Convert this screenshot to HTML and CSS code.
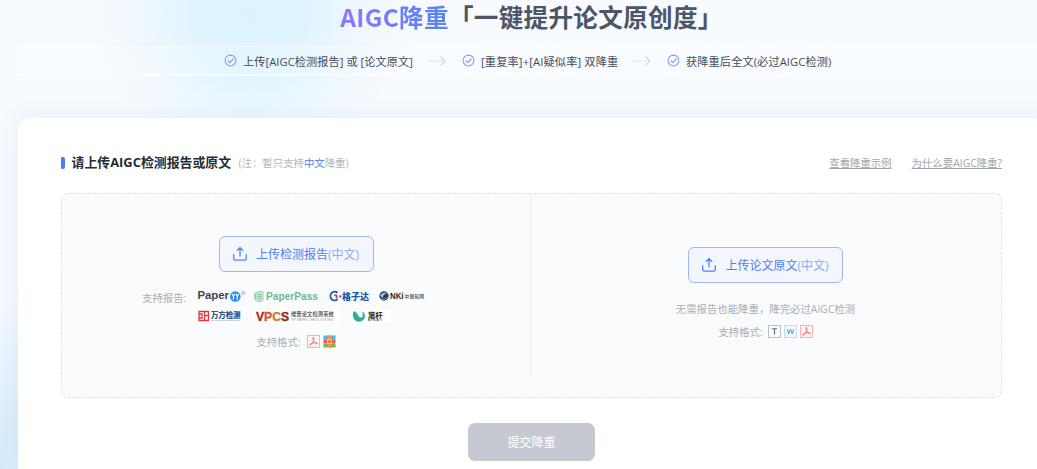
FILE: index.html
```html
<!DOCTYPE html>
<html lang="zh-CN">
<head>
  <meta charset="UTF-8">
  <meta name="viewport" content="width=device-width, initial-scale=1.0">
  <title>AIGC降重</title>
  <link rel="stylesheet" href="styles.css">
</head>
<body>
  <!-- Shared icons -->
  <svg class="sprite" width="0" height="0">
    <symbol id="icon-check" viewBox="0 0 14 14">
      <circle cx="7" cy="7" r="5.8" fill="none" stroke="#7f9bf5" stroke-width="1.1"/>
      <path d="M4.2 7.1l2.1 2.1 4-4.3" fill="none" stroke="#7090f3" stroke-width="1.1"/>
    </symbol>
    <symbol id="icon-arrow" viewBox="0 0 18 12">
      <path d="M0 6h16" fill="none" stroke="#d3d7df" stroke-width="1.2" stroke-dasharray="2 1"/>
      <path d="M12.5 1.5L17 6l-4.5 4.5" fill="none" stroke="#d3d7df" stroke-width="1.2"/>
    </symbol>
    <symbol id="icon-upload" viewBox="0 0 16 16">
      <path d="M1.7 8.3v4.2q0 1.600 1.600 1.600h9.400q1.600 0 1.600-1.600V8.300M8 10.400V2.200M4.900 4.700L8 1.600l3.100 3.100" fill="none" stroke="#5482f5" stroke-width="1.300"/>
    </symbol>
    <symbol id="icon-pdf" viewBox="0 0 13 13">
      <rect x=".5" y=".5" width="12" height="12" fill="#fff4f4" stroke="#f7b3b3"/>
      <path d="M6.200 2.300c1.400 0 .5 3.200-.5 5.200-.9 1.900-2.400 3.200-3 2.700-.7-.7 2.100-2.300 4.600-2.500 2-.2 3.400.2 3.200.9-.3.9-2.700-.5-3.700-2.300-.8-1.500-1.300-4-.6-4z" fill="none" stroke="#f26a6a" stroke-width=".9"/>
    </symbol>
  </svg>

  <div class="page">
    <h1 class="title"><span class="title-accent">AIGC降重</span>「一键提升论文原创度」</h1>

    <div class="steps">
      <svg class="check"><use href="#icon-check"/></svg>
      <span class="step-one">上传[AIGC检测报告] 或 [论文原文]</span>
      <svg class="arrow"><use href="#icon-arrow"/></svg>
      <svg class="check"><use href="#icon-check"/></svg>
      <span class="step-two">[重复率]+[AI疑似率] 双降重</span>
      <svg class="arrow"><use href="#icon-arrow"/></svg>
      <svg class="check"><use href="#icon-check"/></svg>
      <span class="step-three">获降重后全文(必过AIGC检测)</span>
    </div>

    <div class="card">
      <div class="card-head">
        <h2>请上传AIGC检测报告或原文</h2>
        <span class="note">(注：暂只支持<em>中文</em>降重)</span>
        <div class="links">
          <a href="#">查看降重示例</a>
          <a href="#">为什么要AIGC降重?</a>
        </div>
      </div>

      <div class="upload-box">
        <!-- Detection report -->
        <div class="upload-col report-col">
          <button class="upload-btn">
            <svg><use href="#icon-upload"/></svg>
            <span>上传检测报告<i>(中文)</i></span>
          </button>
          <div class="reports">
            <span class="label">支持报告:</span>
            <div class="logos">
              <div class="logo-row">
                <svg width="50" height="14" viewBox="0 0 50 14">
                  <text class="latin" x=".5" y="10.300" font-size="10" textLength="31.500" lengthAdjust="spacingAndGlyphs" fill="#3d434d">Paper</text>
                  <circle cx="38.300" cy="7.500" r="5.300" fill="#2f8de8"/>
                  <path d="M34.800 4.800l1.600 2.200 1.600-2.200M36.400 7v3.700M38.600 4.800l1.600 2.200 1.600-2.200M40.200 7v3.700" fill="none" stroke="#fff" stroke-width="1.100"/>
                  <circle cx="46.300" cy="4" r="1.700" fill="none" stroke="#a9adb5" stroke-width=".8"/>
                  <circle cx="46.300" cy="4" r=".6" fill="#a9adb5"/>
                </svg>
                <svg class="paperpass" width="68" height="14" viewBox="0 0 68 14">
                  <path d="M2.500 3.500l6-1.500 1.500 1v8l-1.500 1.500H4L2.500 11z" fill="#c4e5d2" stroke="#8dcba8" stroke-width=".8"/>
                  <path d="M1 5l1.500 6M4.500 5.500h4M4.500 7.500h4M5 9.500h3" fill="none" stroke="#74bd92" stroke-width=".8"/>
                  <text class="latin" x="13" y="10.500" font-size="10" textLength="52" lengthAdjust="spacingAndGlyphs" fill="#6cba8c">PaperPass</text>
                </svg>
                <svg class="gezida" width="44" height="14" viewBox="0 0 44 14">
                  <path d="M9.500 3.800A4.300 4.300 0 1 0 9.500 10.300" fill="none" stroke="#1b59a5" stroke-width="1.800"/>
                  <path d="M5.500 6.200q2-2 4.200.2v3.200H7.800V7.500z" fill="#e4474a"/>
                  <circle cx="12.300" cy="7.400" r="1.100" fill="#1b59a5"/>
                  <text class="cjk" x="14" y="10.500" font-size="9.300" textLength="27" lengthAdjust="spacingAndGlyphs" fill="#1b59a5">格子达</text>
                </svg>
                <svg class="cnki" width="50" height="14" viewBox="0 0 50 14">
                  <circle cx="6" cy="7" r="4.700" fill="#29405c"/>
                  <path d="M2 6.500q3-4 7-2.500Q5.500 5 4.500 9z" fill="#9ec4df"/>
                  <path d="M2 9.500q4 2.500 8.500-1.500" fill="none" stroke="#8da3b5"/>
                  <text class="latin" x="12" y="10.300" font-size="9" textLength="13.500" lengthAdjust="spacingAndGlyphs" fill="#202429">NKi</text>
                  <circle cx="24.700" cy="4" r=".9" fill="#ee9a4b"/>
                  <text class="cjk kai" x="26.500" y="9" font-size="4.600" textLength="19.500" fill="#42464c">中国知网</text>
                </svg>
              </div>
              <div class="logo-row second">
                <svg class="white-logo" width="48" height="14" viewBox="0 0 48 14">
                  <path d="M2 2.500h9.500v9H2zM2 5h3v4H2M7.500 2.500v9M7.500 6.500h4" fill="none" stroke="#df343d" stroke-width="1.300"/>
                  <text class="cjk" x="14" y="9" font-size="7.500" textLength="29.500" fill="#28558e">万方检测</text>
                  <text class="latin" x="14.500" y="12" font-size="2.300" textLength="28" fill="#8390a3">WANFANG DETECTION</text>
                </svg>
                <svg class="white-logo vpcs" width="86" height="14" viewBox="0 0 86 14">
                  <text class="latin" x="3" y="11.800" font-size="12.500" textLength="33" lengthAdjust="spacingAndGlyphs" stroke-width=".4"><tspan fill="#a82e2b" stroke="#a82e2b">V</tspan><tspan fill="#da562e" stroke="#da562e">P</tspan><tspan fill="#d57835" stroke="#d57835">C</tspan><tspan fill="#8e2929" stroke="#8e2929">S</tspan></text>
                  <text class="cjk light" x="38" y="7" font-size="5.500" textLength="43" lengthAdjust="spacingAndGlyphs" fill="#454545">维普论文检测系统</text>
                  <text class="latin thin" x="38" y="12" font-size="4" textLength="42" lengthAdjust="spacingAndGlyphs" fill="#999">VIP PAPER CHECK SYSTEM</text>
                </svg>
                <svg class="white-logo bigan" width="40" height="14" viewBox="0 0 40 14">
                  <path d="M3 2q3 1 4 4t4 2.500Q12.500 6 11 2q4 3 2.500 7c-2 5-9 5-11 0Q1 5 3 2z" fill="#2fae9d"/>
                  <text class="cjk" x="17" y="8.500" font-size="7.300" textLength="14.500" fill="#303334">笔杆</text>
                  <text class="latin" x="17" y="12.300" font-size="3.200" textLength="14" fill="#444">BIGA<tspan fill="#f19a38">N</tspan></text>
                </svg>
              </div>
            </div>
          </div>
          <div class="formats">
            <span class="label">支持格式:</span>
            <svg class="file"><use href="#icon-pdf"/></svg>
            <svg class="file" viewBox="0 0 13 13">
              <path d="M.5.5h12v4H.5z" fill="#4bb6ec"/>
              <path d="M.5 4.500h12v4H.5z" fill="#ef5a5a"/>
              <path d="M.5 8.500h12v4H.5z" fill="#72bd42"/>
              <path d="M4.800.5h3.400v12H4.800z" fill="#f59a3b"/>
              <rect x="4.500" y="4.800" width="4" height="3.500" fill="#ef6d49" stroke="#ffe3a8" stroke-width=".8"/>
            </svg>
          </div>
        </div>

        <!-- Original paper -->
        <div class="upload-col paper-col">
          <button class="upload-btn">
            <svg><use href="#icon-upload"/></svg>
            <span>上传论文原文<i>(中文)</i></span>
          </button>
          <p class="tip">无需报告也能降重，降完必过AIGC检测</p>
          <div class="formats">
            <span class="label">支持格式:</span>
            <svg class="file" viewBox="0 0 13 13">
              <rect x=".5" y=".5" width="12" height="12" fill="#fbfcfd" stroke="#bcc1c9"/>
              <path d="M4 3.800h5M6.500 3.800v5.700" fill="none" stroke="#5b6779" stroke-width="1.100"/>
            </svg>
            <svg class="file" viewBox="0 0 13 13">
              <rect x=".5" y=".5" width="12" height="12" fill="#f6faff" stroke="#bfdcf7"/>
              <path d="M3.400 4l1.300 5 1.800-5 1.800 5 1.300-5" fill="none" stroke="#4c9be8"/>
            </svg>
            <svg class="file"><use href="#icon-pdf"/></svg>
          </div>
        </div>
      </div>

      <button class="submit-btn">提交降重</button>
    </div>
  </div>
</body>
</html>
```
FILE: styles.css
```css
* {
  box-sizing: border-box;
}
body {
  margin: 0;
  height: 469px;
  overflow: hidden;
  font-family: "Open Sans", "Noto Sans CJK SC", sans-serif;
  color: #444b57;
  background:
    radial-gradient(ellipse 155px 150px at 250px 15px, #dcf3fd 0%, rgba(221, 243, 253, 0.9) 35%, rgba(226, 245, 253, 0.4) 70%, rgba(235, 246, 254, 0) 100%),
    radial-gradient(ellipse 100px 180px at 0 469px, #d4eafb 0%, rgba(214, 235, 251, 0) 100%),
    #f7faff;
}
h1, h2, p {
  margin: 0;
}
button {
  font-family: inherit;
  padding: 0;
}
.sprite {
  position: absolute;
}
.page {
  width: 1063px;
  height: 469px;
  overflow: hidden;
  display: flex;
  flex-direction: column;
}
.title {
  height: 46px;
  font-family: "Noto Sans CJK SC", sans-serif;
  font-size: 24.6px;
  font-weight: 700;
  line-height: 33px;
  letter-spacing: 0.3px;
  text-align: center;
  white-space: nowrap;
  color: #4d5664;
}
.title-accent {
  background: linear-gradient(90deg, #9075fb, #5585f5);
  -webkit-background-clip: text;
  background-clip: text;
  color: transparent;
}
.steps {
  height: 30px;
  margin-left: 18px;
  padding-left: 206px;
  display: flex;
  align-items: center;
  border-top: 1px solid rgba(255, 255, 255, 0.6);
  border-bottom: 2px solid rgba(255, 255, 255, 0.5);
  background: rgba(255, 255, 255, 0.2);
  font-size: 11.2px;
  white-space: nowrap;
}
.check {
  width: 13px;
  height: 13px;
  margin-right: 6px;
}
.arrow {
  width: 18px;
  height: 12px;
  margin: 0 16px 0 14px;
}
.step-one {
  width: 171px;
  letter-spacing: 0.05px;
}
.step-two {
  width: 138px;
  letter-spacing: 0.15px;
}
.step-three {
  letter-spacing: 0.1px;
}
.card {
  width: 1026px;
  height: 351px;
  flex: none;
  margin: 42px 0 0 18px;
  padding: 35px 42px 0 43px;
  display: flex;
  flex-direction: column;
  border-radius: 14px 14px 0 0;
  background: #fff;
  box-shadow: 0 0 24px rgba(100, 140, 190, 0.11);
}
.card-head {
  height: 20px;
  display: flex;
  align-items: center;
  white-space: nowrap;
}
.card-head::before {
  content: "";
  width: 4px;
  height: 12px;
  margin-right: 6.5px;
  border-radius: 1px 2px 2px 1px;
  background: #4a7cf6;
}
.card-head h2 {
  width: 161px;
  line-height: 18px;
  margin-top: -2px;
  font-size: 12.9px;
  color: #282b31;
}
.note {
  margin: -1px 0 0 6px;
  font-size: 10.4px;
  color: #b2b5bb;
}
.note em {
  font-style: normal;
  color: #4a7cf6;
}
.links {
  margin: -1px 0 0 auto;
  display: flex;
  gap: 20px;
  font-size: 10.4px;
}
.links a {
  color: #a3a6ab;
}
.upload-box {
  height: 205px;
  margin-top: 20px;
  display: flex;
  border: 1px dashed #dde1e5;
  border-radius: 7px;
  background: #fafbfd;
}
.upload-col {
  width: 468px;
  display: flex;
  flex-direction: column;
  align-items: center;
}
.report-col {
  padding-top: 42px;
}
.paper-col {
  flex: 1;
  padding-top: 53px;
}
.paper-col::before {
  content: "";
  align-self: flex-start;
  height: 184px;
  margin-top: -54px;
  margin-bottom: -130px;
  border-left: 1px solid #e9edf2;
}
.upload-btn {
  width: 155px;
  height: 36px;
  display: flex;
  align-items: center;
  justify-content: center;
  gap: 8px;
  padding-right: 1px;
  border: 1px solid #9db8f9;
  border-radius: 6px;
  background: #f3f6fd;
  font-size: 12px;
  color: #4f7ef5;
  white-space: nowrap;
}
.upload-btn svg {
  width: 16px;
  height: 16px;
}
.upload-btn i {
  font-style: normal;
  color: #8daafa;
}
.label {
  color: #aaadb3;
  font-size: 10.4px;
  white-space: nowrap;
}
.reports {
  width: 308px;
  margin-top: 16px;
  display: flex;
}
.reports .label {
  width: 55px;
  line-height: 20px;
}
.logo-row {
  height: 16px;
  display: flex;
  align-items: center;
}
.second {
  margin-top: 4px;
}
.paperpass {
  margin-left: 6px;
}
.gezida {
  margin-left: 7px;
}
.cnki {
  margin-left: 6px;
}
.white-logo {
  background: #fff;
}
.vpcs {
  margin-left: 8px;
}
.bigan {
  margin-left: 12px;
}
.latin {
  font-family: "Liberation Sans", sans-serif;
  font-weight: 700;
}
.cjk {
  font-family: "Noto Sans CJK SC", sans-serif;
  font-weight: 900;
}
.kai, .light {
  font-weight: 500;
}
.thin {
  font-weight: 400;
}
.formats {
  height: 16px;
  display: flex;
  align-items: center;
}
.formats .label {
  margin-right: 3px;
}
.report-col .formats {
  margin-top: 9px;
}
.file {
  width: 13px;
  height: 13px;
  margin-left: 3px;
}
.paper-col .formats .label {
  margin-right: 2px;
}
.tip {
  margin-top: 18px;
  font-size: 10.4px;
  line-height: 16px;
  color: #aaadb3;
}
.paper-col .formats {
  margin-top: 6px;
}
.submit-btn {
  width: 127px;
  height: 38px;
  margin-top: 25px;
  align-self: center;
  border: none;
  border-radius: 7px;
  background: #c6c9d1;
  font-size: 12px;
  color: #fff;
}
```
